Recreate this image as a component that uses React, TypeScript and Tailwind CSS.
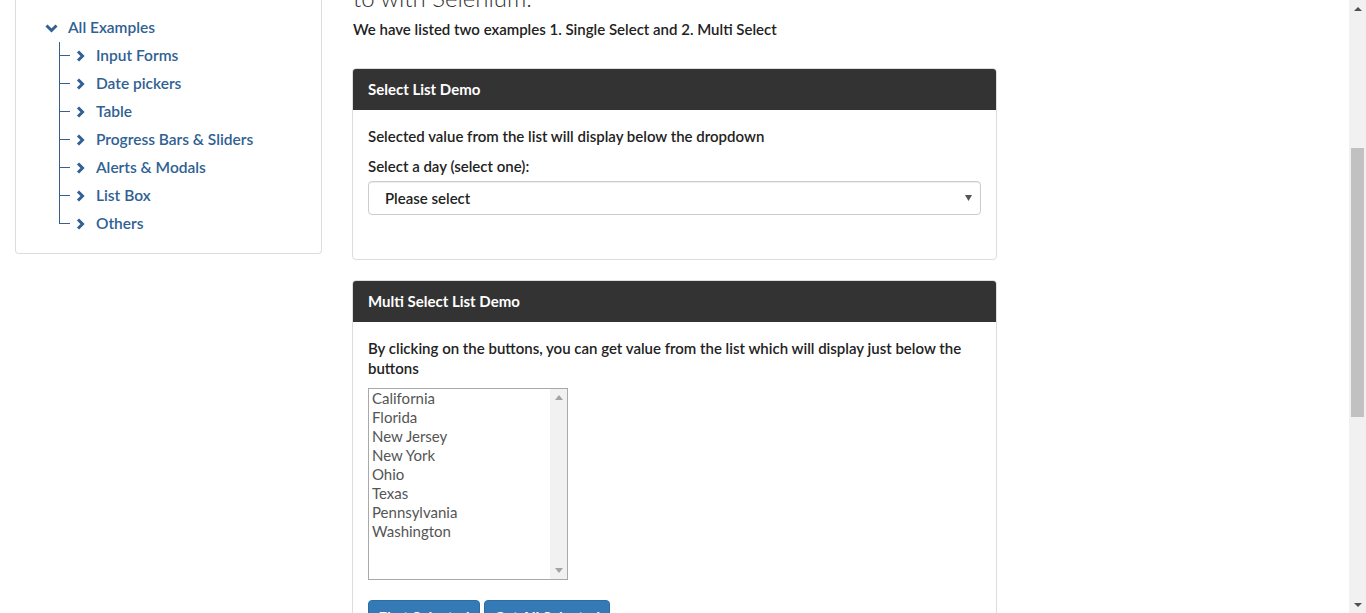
import React from "react";

const font = { fontFamily: "Lato, 'Open Sans', sans-serif" };

function ChevronRight() {
  return (
    <svg width="9" height="12" viewBox="0 0 9 12" className="shrink-0">
      <polyline points="2,1.5 6.5,6 2,10.5" fill="none" stroke="#2f6193" strokeWidth="3" strokeLinecap="butt" strokeLinejoin="miter" />
    </svg>
  );
}

function ChevronDown() {
  return (
    <svg width="13" height="9" viewBox="0 0 13 9" className="shrink-0">
      <polyline points="1.5,1.5 6.5,6.5 11.5,1.5" fill="none" stroke="#2f6193" strokeWidth="3" strokeLinecap="butt" strokeLinejoin="miter" />
    </svg>
  );
}

const items = [
  "Input Forms",
  "Date pickers",
  "Table",
  "Progress Bars & Sliders",
  "Alerts & Modals",
  "List Box",
  "Others",
];

const states = [
  "California",
  "Florida",
  "New Jersey",
  "New York",
  "Ohio",
  "Texas",
  "Pennsylvania",
  "Washington",
];

function Sidebar() {
  return (
    <div className="ml-[15px] w-[307px] shrink-0 self-start border-x border-b border-[#dddddd] rounded-b-[4px] pt-[14px] pb-[15px] pl-[29px]">
      <div className="flex items-center h-[28px] gap-[10px]">
        <ChevronDown />
        <span className="text-[15.5px] font-semibold text-[#2f6193]">All Examples</span>
      </div>
      <div className="ml-[14px]">
        {items.map((it, i) => (
          <div key={it} className="flex h-[28px]">
            <div className="flex flex-col w-[11px] shrink-0">
              <div className="h-[14px] border-l border-b border-[#3a5f88]" />
              <div className={i === items.length - 1 ? "flex-1" : "flex-1 border-l border-[#3a5f88]"} />
            </div>
            <div className="flex items-center pl-[6px] gap-[11px]">
              <ChevronRight />
              <span className="text-[15.5px] font-semibold text-[#2f6193] whitespace-nowrap">{it}</span>
            </div>
          </div>
        ))}
      </div>
    </div>
  );
}

function PanelHeader({ children }: { children: React.ReactNode }) {
  return (
    <div className="h-[41px] bg-[#333333] rounded-t-[3px] flex items-center px-[15px] text-white text-[15px] font-bold">
      {children}
    </div>
  );
}

function ListBox() {
  return (
    <div className="w-[200px] h-[192px] border border-[#a9a9a9] flex bg-white">
      <div className="flex-1 pl-[3px] text-[15px] leading-[19px] font-normal text-[#555555]">
        {states.map((s) => (
          <div key={s}>{s}</div>
        ))}
      </div>
      <div className="w-[17px] bg-[#f1f1f1] flex flex-col items-center justify-between py-[6px]">
        <svg width="8" height="5" viewBox="0 0 8 5">
          <path d="M0 5 L4 0 L8 5 Z" fill="#a3a3a3" />
        </svg>
        <svg width="8" height="5" viewBox="0 0 8 5">
          <path d="M0 0 L8 0 L4 5 Z" fill="#a3a3a3" />
        </svg>
      </div>
    </div>
  );
}

function Main() {
  return (
    <div className="ml-[30px] w-[645px] shrink-0">
      <div className="-mt-[15px] ml-[1px] text-[24px] leading-[26px] font-light text-[#333333] whitespace-nowrap">
        to with Selenium.
      </div>
      <p className="mt-[8px] ml-[1px] text-[15px] leading-[20px] font-semibold text-[#222222]">
        We have listed two examples 1. Single Select and 2. Multi Select
      </p>
      <div className="mt-[29px] border border-[#dddddd] rounded-[4px]">
        <PanelHeader>Select List Demo</PanelHeader>
        <div className="px-[15px] pt-[16px] pb-[44px] text-[15px] leading-[20px] font-semibold text-[#222222]">
          <p className="mb-[10px]">Selected value from the list will display below the dropdown</p>
          <p className="mb-[5px]">Select a day (select one):</p>
          <div className="h-[34px] border border-[#cccccc] rounded-[4px] flex items-center justify-between pl-[16px] pr-[8px] shadow-[inset_0_1px_1px_rgba(0,0,0,0.075)]">
            <span>Please select</span>
            <svg width="7" height="6" viewBox="0 0 7 6">
              <path d="M0 0 L7 0 L3.5 6 Z" fill="#555555" />
            </svg>
          </div>
        </div>
      </div>
      <div className="mt-[20px] border border-[#dddddd] rounded-[4px]">
        <PanelHeader>Multi Select List Demo</PanelHeader>
        <div className="px-[15px] pt-[16px] text-[15px] leading-[20px] font-semibold text-[#222222]">
          <p className="mb-[10px]">
            By clicking on the buttons, you can get value from the list which will display just below the buttons
          </p>
          <ListBox />
          <div className="mt-[20px] flex gap-[4px]">
            <button className="h-[34px] w-[112px] bg-[#337ab7] border border-[#2e6da4] rounded-[4px] text-white text-[15px] font-bold">
              First Selected
            </button>
            <button className="h-[34px] w-[126px] bg-[#337ab7] border border-[#2e6da4] rounded-[4px] text-white text-[15px] font-bold">
              Get All Selected
            </button>
          </div>
        </div>
      </div>
    </div>
  );
}

function PageScrollbar() {
  return (
    <div className="w-[17px] h-full bg-[#f1f1f1] flex flex-col items-center shrink-0">
      <div className="h-[17px] flex items-center justify-center">
        <svg width="8" height="4" viewBox="0 0 8 4">
          <path d="M0 4 L4 0 L8 4 Z" fill="#505050" />
        </svg>
      </div>
      <div className="h-[131px]" />
      <div className="w-[13px] h-[269px] bg-[#c1c1c1]" />
      <div className="flex-1" />
      <div className="h-[17px] flex items-center justify-center">
        <svg width="8" height="4" viewBox="0 0 8 4">
          <path d="M0 0 L8 0 L4 4 Z" fill="#505050" />
        </svg>
      </div>
    </div>
  );
}

export default function App() {
  return (
    <div className="w-[1366px] h-[613px] overflow-hidden flex bg-white" style={font}>
      <div className="flex-1 flex overflow-hidden">
        <Sidebar />
        <Main />
      </div>
      <PageScrollbar />
    </div>
  );
}
